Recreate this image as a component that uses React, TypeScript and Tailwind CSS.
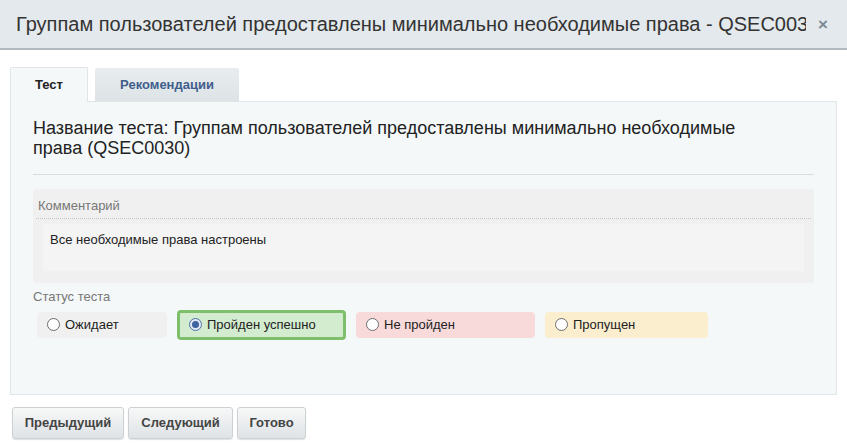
import { useState } from "react";

type Status = "waiting" | "passed" | "failed" | "skipped";

const statuses: { id: Status; label: string; box: string }[] = [
  { id: "waiting", label: "Ожидает", box: "w-[130px] bg-[#f0f0f0]" },
  { id: "passed", label: "Пройден успешно", box: "w-[169px] bg-[#d3ebcf]" },
  { id: "failed", label: "Не пройден", box: "w-[179px] bg-[#f8dadb]" },
  { id: "skipped", label: "Пропущен", box: "w-[163px] bg-[#faeecf]" },
];

const Radio = ({ checked }: { checked: boolean }) => (
  <span
    className={
      checked
        ? "flex h-[13px] w-[13px] items-center justify-center rounded-full border border-[#4f74a8] bg-[#dfe8f3]"
        : "h-[13px] w-[13px] rounded-full border border-[#6e6e6e] bg-white"
    }
  >
    {checked && <span className="h-[7px] w-[7px] rounded-full bg-[#3d63a0]" />}
  </span>
);

export default function App() {
  const [tab, setTab] = useState<"test" | "rec">("test");
  const [status, setStatus] = useState<Status>("passed");

  return (
    <div className="h-[447px] w-[847px] overflow-hidden bg-white font-['Liberation_Sans',Arial,sans-serif] text-[#333]">
      <div className="flex h-[50px] items-center border-b-2 border-[#b3babf] bg-[#e3e9ec] pl-[16px] pr-[19px]">
        <div className="w-[790px] overflow-hidden whitespace-nowrap text-[20px] text-[#333]">
          Группам пользователей предоставлены минимально необходимые права - QSEC0030
        </div>
        <button className="ml-auto text-[17px] font-bold leading-none text-[#7d8a96]">×</button>
      </div>

      <div className="px-[10px] pt-[16px]">
        <div className="flex items-end gap-[7px]">
          <button
            onClick={() => setTab("test")}
            className="relative top-px h-[35px] w-[78px] rounded-t-[2px] border border-b-0 border-[#dfe5e8] bg-[#f4f8f9] text-[13px] font-bold text-[#222]"
          >
            Тест
          </button>
          <button
            onClick={() => setTab("rec")}
            className="h-[33px] w-[144px] rounded-t-[2px] bg-gradient-to-b from-[#e8ecef] to-[#dde3e6] text-[13px] font-bold text-[#3f5e8c]"
          >
            Рекомендации
          </button>
        </div>

        <div className="h-[294px] border border-[#dfe5e8] bg-[#f4f8f9] px-[22px] pt-[16px]">
          {tab === "test" && (
            <>
              <div className="max-w-[725px] text-[18px] leading-[20px] text-[#222]">
                Название теста: Группам пользователей предоставлены минимально необходимые права (QSEC0030)
              </div>
              <div className="mt-[16px] border-t border-[#d8dcdf]" />

              <div className="mt-[14px] h-[94px] rounded-[4px] bg-[#f0f0f0] px-[4px] pt-[9px]">
                <div className="pl-[1px] text-[13px] leading-[15px] text-[#777]">Комментарий</div>
                <div className="mx-[-1px] mt-[5px] border-t border-dotted border-[#c4c4c4]" />
                <div className="mx-[6px] mt-[5px] h-[47px] bg-[#f4f4f4] px-[7px] pt-[6px] text-[13px] text-[#222]">
                  Все необходимые права настроены
                </div>
              </div>

              <div className="mt-[4px] text-[13px] text-[#777]">Статус теста</div>
              <div className="mt-[3px] flex items-center gap-[10px] pl-[4px]">
                {statuses.map((s) => {
                  const active = status === s.id;
                  return (
                    <label
                      key={s.id}
                      onClick={() => setStatus(s.id)}
                      className={
                        active
                          ? `flex h-[30px] cursor-pointer items-center gap-[5px] rounded-[4px] border-[3px] border-[#7fbf6c] pl-[9px] text-[13px] text-[#222] ${s.box}`
                          : `flex h-[26px] cursor-pointer items-center gap-[5px] rounded-[4px] pl-[10px] text-[13px] text-[#222] ${s.box}`
                      }
                    >
                      <Radio checked={active} />
                      {s.label}
                    </label>
                  );
                })}
              </div>
            </>
          )}
        </div>

        <div className="mt-[12px] flex gap-[4px] pl-[2px]">
          {["Предыдущий", "Следующий", "Готово"].map((b, i) => (
            <button
              key={b}
              className={`h-[32px] rounded-[3px] border border-[#ccd1d4] bg-gradient-to-b from-[#f7f8f8] to-[#dfe3e6] text-[13px] font-bold text-[#444] shadow-[0_1px_1px_rgba(0,0,0,0.12)] ${
                i === 0 ? "w-[112px]" : i === 1 ? "w-[105px]" : "w-[69px]"
              }`}
            >
              {b}
            </button>
          ))}
        </div>
      </div>
    </div>
  );
}
